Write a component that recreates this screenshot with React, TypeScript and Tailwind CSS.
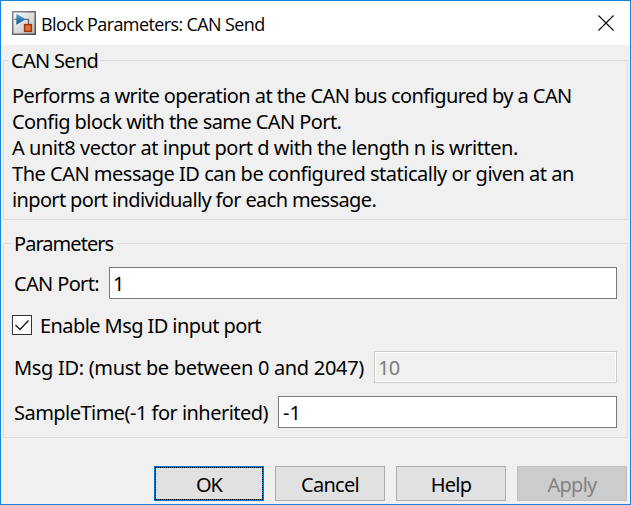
import type { ReactNode } from 'react';

function BlockIcon() {
  return (
    <svg width="24" height="24" viewBox="0 0 24 24" className="shrink-0">
      <defs>
        <linearGradient id="frame" x1="0" y1="0" x2="1" y2="1">
          <stop offset="0" stopColor="#ffffff" />
          <stop offset="1" stopColor="#bdbdbd" />
        </linearGradient>
        <linearGradient id="edge" x1="0" y1="0" x2="1" y2="1">
          <stop offset="0" stopColor="#888" />
          <stop offset="1" stopColor="#4a4a4a" />
        </linearGradient>
        <linearGradient id="tri" x1="0" y1="0" x2="0" y2="1">
          <stop offset="0" stopColor="#5fa9d8" />
          <stop offset="1" stopColor="#0f5488" />
        </linearGradient>
      </defs>
      <rect x="0.75" y="0.75" width="22.5" height="22.5" fill="url(#frame)" stroke="url(#edge)" strokeWidth="1.5" />
      <path d="M2.5 8.3H6M13 8.3H16.5V14" fill="none" stroke="#5a6670" strokeWidth="1.3" />
      <path d="M4.3 2.8L13.8 8.3L4.3 13.8Z" fill="url(#tri)" />
      <rect x="12.6" y="13.6" width="6.8" height="6.8" fill="#e0703f" stroke="#a83208" strokeWidth="1.5" />
    </svg>
  );
}

function Group({ title, legendClass, className, children }: { title: string; legendClass: string; className: string; children: ReactNode }) {
  return (
    <section className={`relative border border-[#dcdcdc] ${className}`}>
      <h2 className={`absolute -top-[15px] h-[30px] bg-[#f0f0f0] leading-[30px] ${legendClass}`}>{title}</h2>
      {children}
    </section>
  );
}

function DialogButton({ label, className }: { label: string; className: string }) {
  return (
    <button className={`flex h-[35px] w-[110px] items-center justify-center border pt-[3px] tracking-[-0.75px] ${className}`}>{label}</button>
  );
}

export default function App() {
  return (
    <div className="flex h-[505px] w-[631px] flex-col overflow-hidden whitespace-nowrap border border-[#1883d7] bg-[#f0f0f0] font-['Noto_Sans',sans-serif] text-[20px] text-black">
      <header className="flex h-[44px] shrink-0 items-center bg-white pl-[11px] pr-[16px]">
        <div className="-mt-[1px]"><BlockIcon /></div>
        <h1 className="ml-[5px] mt-[2px] flex-1 font-['Open_Sans','Noto_Sans',sans-serif] text-[18px] leading-[26px] tracking-[-0.61px]">Block Parameters: CAN Send</h1>
        <svg width="16" height="16" viewBox="0 0 16 16" stroke="#000" strokeWidth="1.1" className="-mt-px">
          <path d="M0.5 0.5L15.5 15.5M15.5 0.5L0.5 15.5" />
        </svg>
      </header>
      <main className="flex flex-col px-[2px] pt-[15px]">
        <Group title="CAN Send" legendClass="left-[5px] pl-[2px] pr-[2px] tracking-[-0.7px]" className="h-[160px] pl-[8px] pt-[22px] leading-[26px]">
          <p className="tracking-[-0.58px]">Performs a write operation at the CAN bus configured by a CAN</p>
          <p className="tracking-[-0.58px]">Config block with the same CAN Port.</p>
          <p className="tracking-[-0.47px]">A unit8 vector at input port d with the length n is written.</p>
          <p className="tracking-[-0.49px]">The CAN message ID can be configured statically or given at an</p>
          <p className="tracking-[-0.64px]">inport port individually for each message.</p>
        </Group>
        <Group title="Parameters" legendClass="left-[7px] pl-[3px] pr-[4px] tracking-[-0.95px]" className="mt-[23px] flex h-[195px] flex-col pl-[9px] pr-[10px] pt-[23px]">
          <label className="flex h-[32px] items-center">
            <span className="w-[96px] pl-px pt-[2px] tracking-[-0.65px]">CAN Port:</span>
            <input className="h-[32px] min-w-0 flex-1 border border-[#7a7a7a] bg-white px-[3px]" defaultValue="1" />
          </label>
          <label className="mt-[11px] flex h-[30px] items-center">
            <span className="-ml-px flex size-[20px] items-center justify-center border border-[#333] bg-white">
              <svg width="16" height="14" viewBox="0 0 16 14" fill="none" stroke="#222" strokeWidth="1.5">
                <path d="M1.5 7L6 11.5L14.5 2.5" />
              </svg>
            </span>
            <span className="ml-[8px] pt-[2px] tracking-[-0.58px]">Enable Msg ID input port</span>
          </label>
          <label className="mt-[11px] flex h-[32px] items-center">
            <span className="w-[361px] pl-px pt-[2px] tracking-[-0.31px]">Msg ID: (must be between 0 and 2047)</span>
            <input disabled className="h-[32px] min-w-0 flex-1 border border-[#ccc] bg-[#f0f0f0] px-[3px] tracking-[-0.6px] text-[#7c7c7c] shadow-[inset_0_0_0_1px_#fff]" defaultValue="10" />
          </label>
          <label className="mt-[13px] flex h-[32px] items-center">
            <span className="w-[265px] pl-px pt-[2px] tracking-[-0.53px]">SampleTime(-1 for inherited)</span>
            <input className="h-[32px] min-w-0 flex-1 border border-[#7a7a7a] bg-white px-[4px]" defaultValue="-1" />
          </label>
        </Group>
      </main>
      <footer className="mt-[28px] flex justify-end gap-[11px] pr-[3px]">
        <button className="h-[35px] w-[110px] border border-[#0078d7] bg-[#0078d7] tracking-[-1px]">
          <span className="flex h-[33px] items-center justify-center border border-dotted border-black bg-[#0078d7]">
            <span className="flex size-full items-center justify-center bg-[#e1e1e1] pt-[3px]">OK</span>
          </span>
        </button>
        <DialogButton label="Cancel" className="border-[#adadad] bg-[#e1e1e1]" />
        <DialogButton label="Help" className="border-[#adadad] bg-[#e1e1e1]" />
        <DialogButton label="Apply" className="border-[#bfbfbf] bg-[#ccc] text-[#838383]" />
      </footer>
    </div>
  );
}
